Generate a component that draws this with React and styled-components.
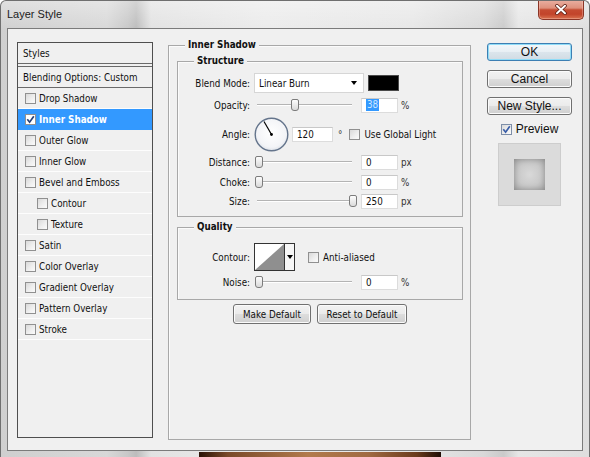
import React from "react";
import styled, { createGlobalStyle } from "styled-components";

const UI = `"DejaVu Sans Condensed", "DejaVu Sans", Verdana, sans-serif`;
const SEGOE = `"Liberation Sans", Arial, sans-serif`;

const Global = createGlobalStyle`
  html, body { margin: 0; padding: 0; background: #ffffff; }
  body { width: 590px; height: 457px; overflow: hidden; }
  * { box-sizing: border-box; }
`;

const Window = styled.div`
  width: 590px;
  height: 457px;
  display: flex;
  flex-direction: column;
  border: 1px solid #6f6f6f;
  border-bottom: 0;
  border-radius: 6px 6px 0 0;
  overflow: hidden;
  font-family: ${UI};
  font-size: 9.75px;
  color: #111;
  background:
    linear-gradient(90deg, #2a1206 0%, #7a4a2a 12%, #b27a4c 45%, #a06a42 70%, #6a3a1c 90%, #1e0c04 100%) 198px 100% / 242px 5px no-repeat,
    linear-gradient(180deg, rgba(255,255,255,0.35), rgba(255,255,255,0) 30px),
    linear-gradient(90deg, #cfcfcf 0%, #d8d8d8 18%, #c8c8c8 21.5%, #bcbcbc 23%, #e2e2e2 25.5%, #ebebeb 45%, #e7e7e7 70%, #d9d9d9 82%, #cacaca 85.5%, #e6e6e6 88%, #dedede 100%);
`;

const TitleBar = styled.div`
  height: 27px;
  display: flex;
  justify-content: space-between;
  align-items: flex-start;
  padding-left: 6px;
`;

const Title = styled.div`
  font-family: ${SEGOE};
  font-size: 11px;
  line-height: 13px;
  margin-top: 7px;
  color: #1b1b1b;
`;

const CloseButton = styled.div`
  width: 46px;
  height: 20px;
  margin-top: -1px;
  margin-right: 5px;
  border: 1px solid #8a3526;
  border-top: 0;
  border-radius: 0 0 5px 5px;
  background: linear-gradient(180deg, #eab0a2 0%, #de907c 42%, #c54b31 52%, #c2442b 75%, #d9724f 100%);
  box-shadow: inset 0 0 0 1px rgba(255, 210, 200, 0.35);
  display: flex;
  align-items: center;
  justify-content: center;
`;

const Panel = styled.div`
  margin: 0 6px;
  height: 423px;
  border: 1px solid #7b7b7b;
  background: #f0f0f0;
  display: flex;
  align-items: flex-start;
  padding: 13px 0 0 9px;
`;

/* ---------- left list ---------- */
const StylesList = styled.div`
  width: 136px;
  height: 396px;
  border: 1px solid #4f4f4f;
  display: flex;
  flex-direction: column;
`;

const ListHeader = styled.div`
  height: ${(p) => p.$h}px;
  display: flex;
  align-items: center;
  padding-left: 5px;
  border-top: ${(p) => (p.$top ? "1px solid #6a6a6a" : "0")};
  border-bottom: 1px solid #6a6a6a;
  margin-bottom: ${(p) => p.$mb || 0}px;
`;

const StyleRow = styled.div`
  height: 21px;
  display: flex;
  align-items: center;
  gap: 3px;
  padding-left: ${(p) => (p.$indent ? 19 : 7)}px;
  border-bottom: 1px solid ${(p) => (p.$active ? "#3399ff" : "#fdfdfd")};
  background: ${(p) => (p.$active ? "#3399ff" : "transparent")};
  color: ${(p) => (p.$active ? "#ffffff" : "#111")};
  font-weight: ${(p) => (p.$active ? "bold" : "normal")};
`;

const CheckBoxBox = styled.span`
  flex: none;
  width: 11px;
  height: 11px;
  border: 1px solid ${(p) => (p.$blue ? "#7d8ea8" : "#909090")};
  background: ${(p) => (p.$white ? "#ffffff" : "linear-gradient(135deg, #d9d9d9 0%, #eeeeee 55%, #fbfbfb 100%)")};
  display: inline-flex;
  align-items: center;
  justify-content: center;
`;

const CheckBox = ({ checked, white, blue, color = "#24407a" }) => (
  <CheckBoxBox $white={white} $blue={blue}>
    {checked && (
      <svg width="9" height="9" viewBox="0 0 9 9">
        <path d="M1.3 4.3 L3.6 7.2 L7.8 1.2" fill="none" stroke={color} strokeWidth="1.7" />
      </svg>
    )}
  </CheckBoxBox>
);

/* ---------- group boxes ---------- */
const Group = styled.div`
  position: relative;
  width: ${(p) => p.$w}px;
  height: ${(p) => p.$h}px;
  margin-top: ${(p) => p.$mt || 0}px;
  margin-left: ${(p) => p.$ml || 0}px;
  border: 1px solid #a8a8a8;
  box-shadow: inset 1px 1px 0 #fbfbfb;
  display: flex;
  flex-direction: column;
  padding: ${(p) => p.$pad || "0"};
`;

const Legend = styled.span`
  position: absolute;
  top: -7px;
  left: 16px;
  padding: 0 3px;
  line-height: 12px;
  font-weight: bold;
  background: #f0f0f0;
  color: #111;
`;

const Row = styled.div`
  display: flex;
  align-items: center;
  height: ${(p) => p.$h}px;
  margin-top: ${(p) => p.$mt}px;
`;

const Label = styled.span`
  width: 72px;
  text-align: right;
  margin-right: 4px;
  flex: none;
`;

const Select = styled.div`
  width: 110px;
  height: 20px;
  background: #fff;
  border: 1px solid #d6d6d6;
  display: flex;
  align-items: center;
  justify-content: space-between;
  padding: 0 6px 0 4px;
`;

const DownArrow = styled.span`
  width: 0;
  height: 0;
  border-left: 3.5px solid transparent;
  border-right: 3.5px solid transparent;
  border-top: 4px solid #000;
`;

const Swatch = styled.div`
  width: 31px;
  height: 16px;
  margin-left: 4px;
  background: #000;
  border: 1px solid #4a4a4a;
`;

const SliderTrack = styled.div`
  position: relative;
  width: 102px;
  height: 16px;
  margin-left: 1px;
  flex: none;
  &::before {
    content: "";
    position: absolute;
    left: 2px;
    right: 5px;
    top: 7px;
    height: 1px;
    background: #b4b4b4;
    box-shadow: 0 1px 0 #ffffff;
  }
`;

const Thumb = styled.span`
  position: absolute;
  top: 2px;
  width: 8px;
  height: 12px;
  border: 1px solid #7c7c7c;
  border-radius: 2px 2px 3px 3px;
  background: linear-gradient(180deg, #fdfdfd, #dadada);
`;

const Slider = ({ value }) => (
  <SliderTrack>
    <Thumb style={{ left: `${Math.round(value * 94)}px` }} />
  </SliderTrack>
);

const NumField = styled.div`
  width: ${(p) => p.$w || 37}px;
  height: 15px;
  margin-left: ${(p) => p.$ml ?? 4}px;
  background: #fff;
  border: 1px solid #dcdcdc;
  border-top-color: #c8c8c8;
  padding-left: 4px;
  display: flex;
  align-items: center;
  flex: none;
`;

const Selected = styled.span`
  background: #3399ff;
  color: #cde6ff;
  padding: 0 1px;
  line-height: 12px;
`;

const Unit = styled.span`
  margin-left: ${(p) => p.$ml ?? 3}px;
  color: #333;
`;

const CheckLabel = styled.label`
  display: flex;
  align-items: center;
  gap: 4px;
  margin-left: ${(p) => p.$ml}px;
`;

const ContourPicker = styled.div`
  width: 41px;
  height: 28px;
  border: 1px solid #333;
  display: flex;
  background: #fff;
`;

const ContourArrow = styled.div`
  width: 10px;
  border-left: 1px solid #333;
  background: #f6f6f6;
  display: flex;
  align-items: center;
  justify-content: center;
`;

const ButtonRow = styled.div`
  display: flex;
  justify-content: center;
  gap: 6px;
  margin-top: 4px;
`;

const WinButton = styled.button`
  width: ${(p) => p.$w}px;
  height: ${(p) => p.$h || 20}px;
  padding: 0;
  font-family: ${(p) => (p.$big ? SEGOE : UI)};
  font-size: ${(p) => (p.$big ? "12px" : "9.75px")};
  color: #111;
  border: 1px solid ${(p) => (p.$default ? "#3d7fb3" : "#707070")};
  border-radius: 3px;
  background: ${(p) =>
    p.$default
      ? "linear-gradient(180deg, #f3f8fb 0%, #e8eff4 48%, #dbe5ec 52%, #d0dbe3 100%)"
      : "linear-gradient(180deg, #f2f2f2 0%, #ebebeb 48%, #dddddd 52%, #cfcfcf 100%)"};
  box-shadow: inset 0 0 0 1px ${(p) => (p.$default ? "#8fdcf7" : "#fbfbfb")};
`;

/* ---------- right column ---------- */
const RightCol = styled.div`
  width: 85px;
  margin-left: 16px;
  margin-top: 1px;
  display: flex;
  flex-direction: column;
  align-items: center;
  gap: 9px;
`;

const PreviewCheck = styled.label`
  height: 10px;
  display: flex;
  align-items: center;
  gap: 4px;
  font-family: ${SEGOE};
  font-size: 12px;
  color: #111;
`;

const PreviewBox = styled.div`
  width: 63px;
  height: 63px;
  border: 1px solid #cdcdcd;
  background: #dbdbdb;
  display: flex;
  align-items: center;
  justify-content: center;
`;

const PreviewSwatch = styled.div`
  width: 31px;
  height: 31px;
  background: radial-gradient(circle, #d9d9d9 0%, #c9c9c9 55%, #b0b0b0 100%);
  box-shadow: inset 0 0 6px rgba(0, 0, 0, 0.25);
`;

const styleItems = [
  { name: "Drop Shadow" },
  { name: "Inner Shadow", active: true, checked: true },
  { name: "Outer Glow" },
  { name: "Inner Glow" },
  { name: "Bevel and Emboss" },
  { name: "Contour", indent: true },
  { name: "Texture", indent: true },
  { name: "Satin" },
  { name: "Color Overlay" },
  { name: "Gradient Overlay" },
  { name: "Pattern Overlay" },
  { name: "Stroke" },
];

const Dial = ({ angle }) => {
  const r = (angle * Math.PI) / 180;
  const x = 17.5 + Math.cos(r) * 15;
  const y = 17.5 - Math.sin(r) * 15;
  return (
    <svg width="35" height="35" viewBox="0 0 35 35" style={{ flex: "none" }}>
      <defs>
        <radialGradient id="dialg" cx="50%" cy="45%" r="55%">
          <stop offset="0%" stopColor="#ffffff" />
          <stop offset="80%" stopColor="#f3f4f7" />
          <stop offset="100%" stopColor="#dde1e8" />
        </radialGradient>
      </defs>
      <circle cx="17.5" cy="17.5" r="16.3" fill="url(#dialg)" stroke="#65758c" strokeWidth="1.4" />
      <line x1="17.5" y1="17.5" x2={x} y2={y} stroke="#000" strokeWidth="1.2" />
      <circle cx="17.5" cy="17.5" r="1.4" fill="#000" />
    </svg>
  );
};

export default function App() {
  return (
    <>
      <Global />
      <Window>
        <TitleBar>
          <Title>Layer Style</Title>
          <CloseButton>
            <svg width="14" height="11" viewBox="0 0 14 11">
              <path d="M3 1.8 L11 9.2 M11 1.8 L3 9.2" stroke="#5c1f14" strokeWidth="3.6" strokeLinecap="round" />
              <path d="M3 1.8 L11 9.2 M11 1.8 L3 9.2" stroke="#ffffff" strokeWidth="2" strokeLinecap="round" />
            </svg>
          </CloseButton>
        </TitleBar>

        <Panel>
          <StylesList>
            <ListHeader $h={21} $mb={2}>Styles</ListHeader>
            <ListHeader $h={22} $top>Blending Options: Custom</ListHeader>
            {styleItems.map((it) => (
              <StyleRow key={it.name} $active={it.active} $indent={it.indent}>
                <CheckBox checked={it.checked} white={it.active} />
                <span>{it.name}</span>
              </StyleRow>
            ))}
          </StylesList>

          <Group $w={303} $h={395} $mt={3} $ml={15} $pad="15px 7px 0 8px">
            <Legend>Inner Shadow</Legend>

            <Group $w={286} $h={156}>
              <Legend>Structure</Legend>
              <Row $h={20} $mt={11}>
                <Label>Blend Mode:</Label>
                <Select>
                  <span>Linear Burn</span>
                  <DownArrow />
                </Select>
                <Swatch />
              </Row>
              <Row $h={16} $mt={4}>
                <Label>Opacity:</Label>
                <Slider value={0.38} />
                <NumField>
                  <Selected>38</Selected>
                </NumField>
                <Unit>%</Unit>
              </Row>
              <Row $h={34} $mt={4}>
                <Label>Angle:</Label>
                <Dial angle={120} />
                <NumField $w={41} $ml={3}>120</NumField>
                <Unit $ml={5}>°</Unit>
                <CheckLabel $ml={7}>
                  <CheckBox />
                  <span>Use Global Light</span>
                </CheckLabel>
              </Row>
              <Row $h={16} $mt={3}>
                <Label>Distance:</Label>
                <Slider value={0} />
                <NumField>0</NumField>
                <Unit>px</Unit>
              </Row>
              <Row $h={16} $mt={4}>
                <Label>Choke:</Label>
                <Slider value={0} />
                <NumField>0</NumField>
                <Unit>%</Unit>
              </Row>
              <Row $h={16} $mt={3}>
                <Label>Size:</Label>
                <Slider value={1} />
                <NumField>250</NumField>
                <Unit>px</Unit>
              </Row>
            </Group>

            <Group $w={286} $h={73} $mt={10}>
              <Legend>Quality</Legend>
              <Row $h={28} $mt={15}>
                <Label>Contour:</Label>
                <ContourPicker>
                  <svg width="29" height="26" viewBox="0 0 29 26">
                    <polygon points="0,26 29,0 29,26" fill="#8f8f8f" />
                  </svg>
                  <ContourArrow>
                    <DownArrow />
                  </ContourArrow>
                </ContourPicker>
                <CheckLabel $ml={13}>
                  <CheckBox />
                  <span>Anti-aliased</span>
                </CheckLabel>
              </Row>
              <Row $h={16} $mt={3}>
                <Label>Noise:</Label>
                <Slider value={0} />
                <NumField>0</NumField>
                <Unit>%</Unit>
              </Row>
            </Group>

            <ButtonRow>
              <WinButton $w={78}>Make Default</WinButton>
              <WinButton $w={90}>Reset to Default</WinButton>
            </ButtonRow>
          </Group>

          <RightCol>
            <WinButton $w={85} $h={18} $big $default>OK</WinButton>
            <WinButton $w={85} $h={18} $big>Cancel</WinButton>
            <WinButton $w={85} $h={18} $big>New Style...</WinButton>
            <PreviewCheck>
              <CheckBox checked blue color="#3a5ea8" />
              <span>Preview</span>
            </PreviewCheck>
            <PreviewBox>
              <PreviewSwatch />
            </PreviewBox>
          </RightCol>
        </Panel>
      </Window>
    </>
  );
}
